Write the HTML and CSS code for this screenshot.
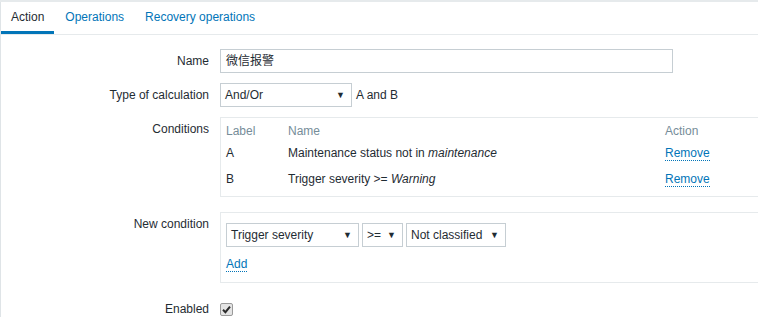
FILE: index.html
```html
<!DOCTYPE html>
<html lang="en">
<head>
    <meta charset="UTF-8">
    <title>Action</title>
    <link rel="stylesheet" href="styles.css">
</head>
<body>

<div class="top-band"></div>
<div class="page">
    <ul class="tabs">
        <li class="tab active">Action</li>
        <li class="tab"><a href="#">Operations</a></li>
        <li class="tab"><a href="#">Recovery operations</a></li>
    </ul>

    <div class="form">
        <div class="row">
            <label class="lbl">Name</label>
            <div class="field"><span class="input name-input">微信报警</span></div>
        </div>
        <div class="row">
            <label class="lbl">Type of calculation</label>
            <div class="field">
                <span class="select calc-select">And/Or<span class="arrow">▼</span></span>
                <span class="calc-text">A and B</span>
            </div>
        </div>
        <div class="row row-box">
            <label class="lbl">Conditions</label>
            <div class="field">
                <div class="box cond-box">
                    <table class="cond-table">
                        <tr class="head">
                            <td class="c-label">Label</td>
                            <td class="c-name">Name</td>
                            <td>Action</td>
                        </tr>
                        <tr>
                            <td>A</td>
                            <td>Maintenance status not in <em>maintenance</em></td>
                            <td><a class="link" href="#">Remove</a></td>
                        </tr>
                        <tr>
                            <td>B</td>
                            <td>Trigger severity &gt;= <em>Warning</em></td>
                            <td><a class="link" href="#">Remove</a></td>
                        </tr>
                    </table>
                </div>
            </div>
        </div>
        <div class="row row-box2">
            <label class="lbl">New condition</label>
            <div class="field">
                <div class="box new-box">
                    <div class="selects">
                        <span class="select sel-type">Trigger severity<span class="arrow">▼</span></span>
                        <span class="select sel-op">&gt;=<span class="arrow">▼</span></span>
                        <span class="select sel-sev">Not classified<span class="arrow">▼</span></span>
                    </div>
                    <div class="add-line"><a class="link" href="#">Add</a></div>
                </div>
            </div>
        </div>
        <div class="row">
            <label class="lbl">Enabled</label>
            <div class="field">
                <span class="checkbox">
                    <svg width="9" height="9" viewBox="0 0 9 9"><path d="M1 4.8 L3.4 7.2 L8 1.6" fill="none" stroke="#2b2b2b" stroke-width="2"/></svg>
                </span>
            </div>
        </div>
    </div>
</div>

</body>
</html>
```

FILE: styles.css
```css
body {
    margin: 0;
    padding: 0;
    background-color: #fff;
    color: #1f2c33;
    font-family: "Liberation Sans", Arial, "Noto Sans CJK SC", sans-serif;
    font-size: 12px;
    overflow: hidden;
}
a {
    color: #0275b8;
    text-decoration: none;
}
.top-band {
    height: 2px;
    background-color: #e6eaec;
}
.page {
    border-left: 1px solid #dfe4e7;
    min-height: 400px;
}
.tabs {
    display: flex;
    margin: 0;
    padding: 0;
    list-style: none;
    border-bottom: 1px solid #e6eaec;
}
.tab {
    padding: 1px 10px 0;
    margin-right: 1px;
    line-height: 28px;
    border-bottom: 3px solid transparent;
}
.tab.active {
    border-bottom-color: #0275b8;
}
.form {
    padding-top: 14px;
}
.row {
    display: grid;
    grid-template-columns: 208px 1fr;
    column-gap: 11px;
    margin-bottom: 10px;
}
.row-box {
    margin-bottom: 15px;
}
.row-box2 {
    margin-bottom: 14px;
}
.lbl {
    text-align: right;
    line-height: 24px;
}
.field {
    display: flex;
    align-items: flex-start;
}
.input,
.select {
    box-sizing: border-box;
    height: 24px;
    border: 1px solid #c6ced3;
    background-color: #fff;
    line-height: 22px;
    white-space: nowrap;
}
.input {
    display: block;
    padding: 0 5px;
}
.name-input {
    width: 453px;
}
.select {
    display: inline-flex;
    justify-content: space-between;
    align-items: center;
    padding: 0 6px 0 4px;
}
.arrow {
    font-size: 9px;
    color: #1f2c33;
}
.calc-select {
    width: 132px;
}
.calc-text {
    margin-left: 4px;
    line-height: 24px;
}
.box {
    box-sizing: border-box;
    width: 640px;
    border: 1px solid #e6eaec;
}
.cond-box {
    padding: 3px 5px 4px;
}
.cond-table {
    border-collapse: collapse;
}
.cond-table td {
    padding: 0;
    height: 26px;
    white-space: nowrap;
}
.cond-table .head td {
    height: 19px;
    color: #768d99;
}
.c-label {
    width: 62px;
}
.c-name {
    width: 377px;
}
.link {
    border-bottom: 1px dotted #0275b8;
}
.new-box {
    padding: 10px 5px 9px;
}
.selects {
    display: flex;
    gap: 3px;
}
.sel-type {
    width: 133px;
}
.sel-op {
    width: 41px;
}
.sel-sev {
    width: 100px;
}
.add-line {
    margin-top: 8px;
    line-height: 18px;
}
.checkbox {
    box-sizing: border-box;
    display: inline-flex;
    align-items: center;
    justify-content: center;
    width: 13px;
    height: 13px;
    margin-top: 6px;
    border: 1px solid #9a9a9a;
    border-radius: 2px;
    background-color: #e4e4e4;
}
```
